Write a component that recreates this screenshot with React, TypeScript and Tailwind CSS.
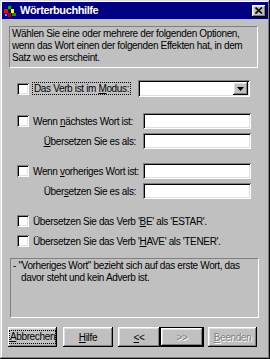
import React from 'react';

const sunken =
  'shadow-[inset_1px_1px_#808080,inset_-1px_-1px_#ffffff,inset_2px_2px_#000000,inset_-2px_-2px_#dfdfdf]';
const raised =
  'shadow-[inset_-1px_-1px_#000000,inset_1px_1px_#ffffff,inset_-2px_-2px_#808080,inset_2px_2px_#dfdfdf]';
const staticEdge = 'border border-t-[#808080] border-l-[#808080] border-b-white border-r-white';
const disabledText = 'text-[#808080] [text-shadow:1px_1px_0_#ffffff]';

const U: React.FC<{ children: React.ReactNode }> = ({ children }) => <span className="underline underline-offset-[1px]">{children}</span>;

const CheckBox: React.FC = () => <div className={`w-[12px] h-[12px] bg-white shrink-0 ${sunken}`} />;

const TextField: React.FC<{ w: string }> = ({ w }) => <div className={`${w} h-full bg-white ${sunken}`} />;

const TitleIcon: React.FC = () => (
  <svg width="14" height="14" viewBox="0 0 14 14">
    <rect x="1" y="5" width="4" height="4" fill="#ff0000" />
    <rect x="5" y="2" width="3" height="3" fill="#00c000" />
    <rect x="8" y="5" width="3" height="4" fill="#ffff00" />
    <rect x="5" y="9" width="3" height="4" fill="#c00000" />
    <rect x="9" y="9" width="4" height="3" fill="#00a000" />
    <rect x="2" y="10" width="2" height="2" fill="#8080ff" />
  </svg>
);

const Button: React.FC<{ w: string; children: React.ReactNode; def?: boolean; disabled?: boolean; focus?: boolean }> = ({
  w,
  children,
  def,
  disabled,
  focus,
}) => (
  <div className={`${w} h-[20px] shrink-0 ${def ? 'border border-black' : ''}`}>
    <div className={`w-full h-full flex items-center justify-center bg-[#c0c0c0] ${raised}`}>
      <span className={`${disabled ? disabledText : 'text-black'} ${focus ? 'border border-dotted border-black px-[0px] leading-[12px]' : ''}`}>
        {children}
      </span>
    </div>
  </div>
);

export default function App() {
  return (
    <div
      className={`w-[270px] h-[359px] bg-[#c0c0c0] p-[2px] flex flex-col text-[10px] tracking-[-0.35px] text-black font-['Liberation_Sans',Arial,sans-serif] shadow-[inset_-1px_-1px_#0a0a0a,inset_1px_1px_#dfdfdf,inset_-2px_-2px_#808080,inset_2px_2px_#ffffff]`}
    >
      {/* title bar */}
      <div className="h-[17px] bg-[#000080] flex items-center pl-[1px] pr-[2px] shrink-0">
        <TitleIcon />
        <span className="ml-[3px] text-white font-bold text-[11px] tracking-[-0.4px]">Wörterbuchhilfe</span>
        <div className={`ml-auto w-[14px] h-[12px] bg-[#c0c0c0] flex items-center justify-center ${raised}`}>
          <svg width="8" height="7" viewBox="0 0 8 7">
            <path d="M0.5 0.5 L7 6.5 M7 0.5 L0.5 6.5" stroke="#000" strokeWidth="1.6" />
          </svg>
        </div>
      </div>

      {/* info box */}
      <div className={`mt-[7px] ml-[7px] w-[249px] h-[42px] ${staticEdge} pl-[2px] pt-[1px] leading-[12px]`}>
        Wählen Sie eine oder mehrere der folgenden Optionen,
        <br />
        wenn das Wort einen der folgenden Effekten hat, in dem
        <br />
        Satz wo es erscheint.
      </div>

      {/* modus row */}
      <div className="mt-[12px] h-[17px] flex items-center">
        <div className="w-[136px] flex items-center pl-[15px]">
          <CheckBox />
          <span className="ml-[3px] border border-dotted border-black px-[1px] leading-[11px]">
            Das Verb ist im <U>M</U>odus:
          </span>
        </div>
        <div className={`w-[112px] h-full bg-white ${sunken} flex justify-end p-[2px]`}>
          <div className={`w-[15px] h-full bg-[#c0c0c0] ${raised} flex items-center justify-center`}>
            <svg width="7" height="4" viewBox="0 0 7 4">
              <path d="M0 0 H7 L3.5 4 Z" fill="#000" />
            </svg>
          </div>
        </div>
      </div>

      {/* next word */}
      <div className="mt-[16px] h-[16px] flex items-center">
        <div className="w-[141px] flex items-center pl-[15px]">
          <CheckBox />
          <span className="ml-[4px]">
            Wenn <U>n</U>ächstes Wort ist:
          </span>
        </div>
        <TextField w="w-[108px]" />
      </div>
      <div className="mt-[4px] h-[16px] flex items-center">
        <div className="w-[141px] text-right pr-[7px]">
          <U>Ü</U>bersetzen Sie es als:
        </div>
        <TextField w="w-[108px]" />
      </div>

      {/* previous word */}
      <div className="mt-[14px] h-[16px] flex items-center">
        <div className="w-[141px] flex items-center pl-[15px]">
          <CheckBox />
          <span className="ml-[4px]">
            Wenn <U>v</U>orheriges Wort ist:
          </span>
        </div>
        <TextField w="w-[108px]" />
      </div>
      <div className="mt-[4px] h-[16px] flex items-center">
        <div className="w-[141px] text-right pr-[7px]">
          Über<U>s</U>etzen Sie es als:
        </div>
        <TextField w="w-[108px]" />
      </div>

      {/* verb checkboxes */}
      <div className="mt-[16px] h-[12px] flex items-center pl-[15px]">
        <CheckBox />
        <span className="ml-[4px]">
          Übersetzen Sie das Verb '<U>B</U>E' als 'ESTAR'.
        </span>
      </div>
      <div className="mt-[8px] h-[12px] flex items-center pl-[15px]">
        <CheckBox />
        <span className="ml-[4px]">
          Übersetzen Sie das Verb '<U>H</U>AVE' als 'TENER'.
        </span>
      </div>

      {/* note */}
      <div className={`mt-[11px] ml-[8px] w-[249px] h-[60px] ${staticEdge} pl-[2px] pt-[1px] leading-[12px]`}>
        - "Vorheriges Wort" bezieht sich auf das erste Wort, das
        <br />
        <span className="pl-[8px]">davor steht und kein Adverb ist.</span>
      </div>

      {/* buttons */}
      <div className="mt-[9px] ml-[6px] flex items-center">
        <Button w="w-[49px]" focus>
          <U>A</U>bbrechen
        </Button>
        <div className="w-[6px]" />
        <Button w="w-[50px]">
          <U>H</U>ilfe
        </Button>
        <div className="w-[5px]" />
        <Button w="w-[42px]">
          <U>&lt;</U>&lt;
        </Button>
        <Button w="w-[44px]" def disabled>
          &gt;&gt;
        </Button>
        <div className="w-[4px]" />
        <Button w="w-[49px]" disabled>
          <U>B</U>eenden
        </Button>
      </div>
    </div>
  );
}
